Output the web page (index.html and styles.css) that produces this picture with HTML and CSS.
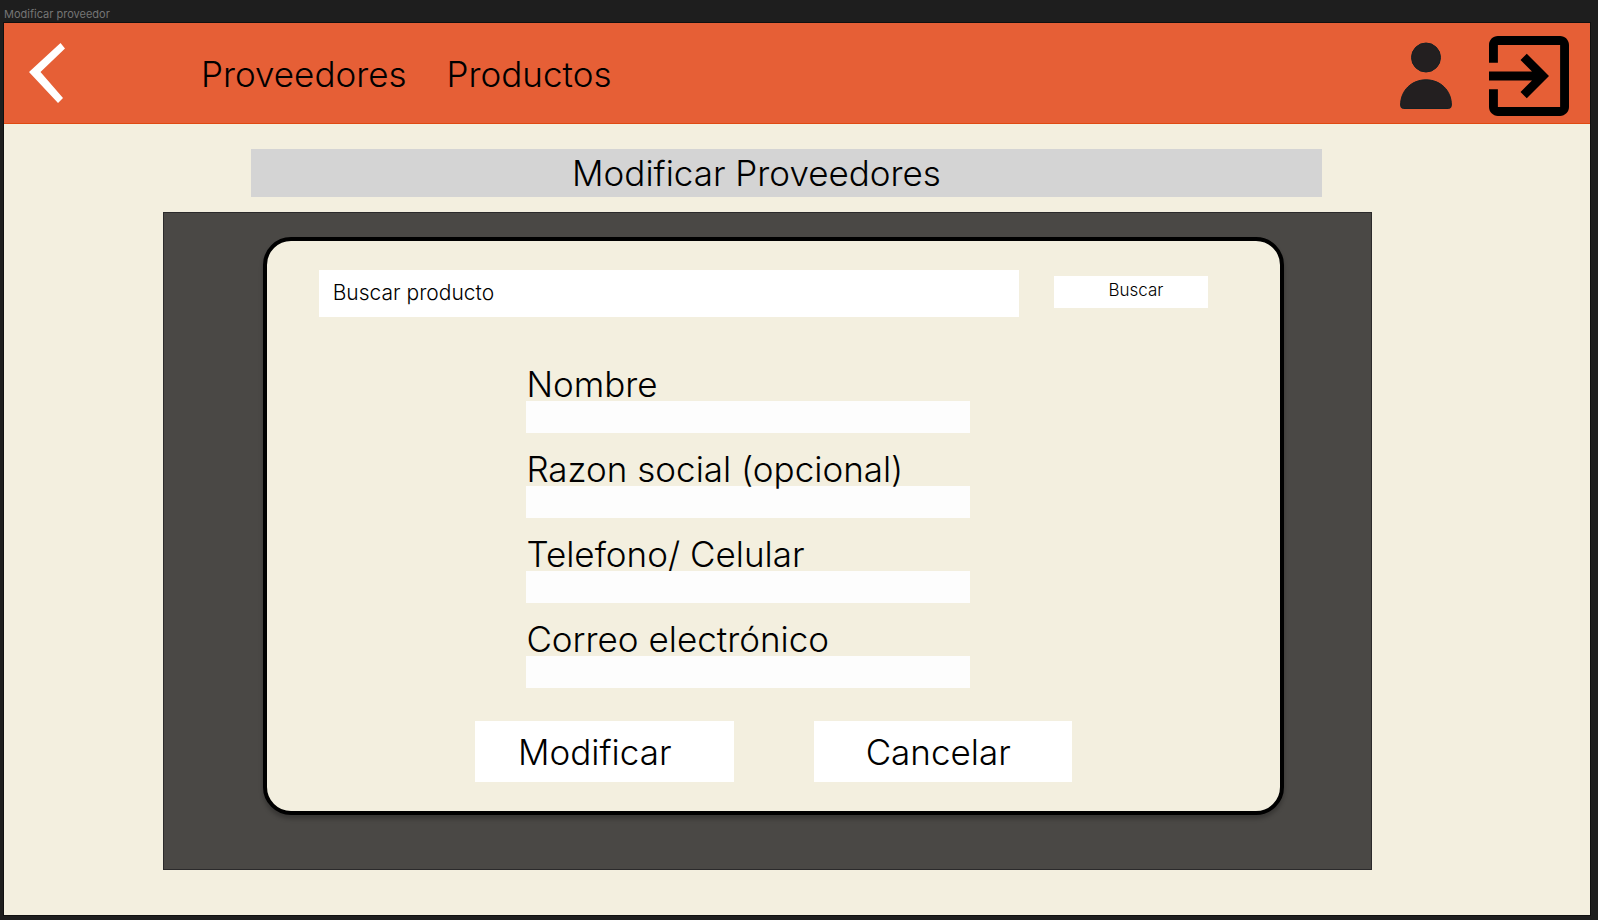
FILE: index.html
```html
<!DOCTYPE html>
<html lang="es">
<head>
<meta charset="utf-8">
<meta name="viewport" content="width=device-width, initial-scale=1">
<title>Modificar proveedor</title>
<link rel="stylesheet" href="styles.css">
</head>
<body>
<div class="frame-name">Modificar proveedor</div>
<div class="frame">
  <header class="topbar">
    <button class="icon-button" type="button" aria-label="Volver">
      <svg width="36" height="62" viewBox="0 0 36 62"><path d="M31.500 1 36 6.500 11.500 30 34 56 29 61 0 30Z" fill="#fff"/></svg>
    </button>
    <nav class="nav">
      <a href="#">Proveedores</a>
      <a href="#">Productos</a>
    </nav>
    <div class="actions">
      <button class="icon-button" type="button" aria-label="Perfil">
        <svg width="52" height="68" viewBox="0 0 52 68"><g fill="#231f20" stroke="#142024" stroke-width="1"><circle cx="26" cy="15.500" r="14.500"/><path d="M.6 63C.6 48 12 37.800 26 37.800S51.400 48 51.400 63Q51.400 66.500 48.500 66.500H3.500Q.6 66.500 .6 63Z"/></g></svg>
      </button>
      <button class="icon-button" type="button" aria-label="Salir">
        <svg width="80" height="80" viewBox="3 3 18 18"><path d="M10.090 15.590 11.500 17l5-5-5-5-1.410 1.410L12.670 11H3v2h9.670l-2.580 2.590zM19 3H5c-1.110 0-2 .9-2 2v4h2V5h14v14H5v-4H3v4c0 1.100.89 2 2 2h14c1.100 0 2-.9 2-2V5c0-1.100-.9-2-2-2z"/></svg>
      </button>
    </div>
  </header>
  <main>
    <div class="title-row"><h1 class="title">Modificar Proveedores</h1></div>
    <div class="panel-row">
      <section class="panel">
        <form class="card">
          <div class="search">
            <input class="search-input" type="text" placeholder="Buscar producto" aria-label="Buscar producto">
            <button class="search-button" type="button">Buscar</button>
          </div>
          <div class="fields">
            <div class="field"><label for="nombre">Nombre</label><input id="nombre" type="text"></div>
            <div class="field"><label for="razon">Razon social (opcional)</label><input id="razon" type="text"></div>
            <div class="field"><label for="telefono">Telefono/ Celular</label><input id="telefono" type="tel"></div>
            <div class="field"><label for="correo">Correo electrónico</label><input id="correo" type="email"></div>
          </div>
          <div class="buttons">
            <button class="button modify" type="submit">Modificar</button>
            <button class="button cancel" type="button">Cancelar</button>
          </div>
        </form>
      </section>
    </div>
  </main>
</div>
</body>
</html>
```
FILE: styles.css
```css
* { box-sizing: border-box; }
body {
  margin: 0;
  min-height: 100vh;
  display: flex;
  flex-direction: column;
  padding: 0 8px 5px 4px;
  background: #1e1e1e;
  color: #000;
  font-family: Inter, "Open Sans", sans-serif;
  font-size: 35px;
  font-weight: 300;
}
button, input { border: 0; border-radius: 0; margin: 0; padding: 0; font: inherit; color: inherit; }
.frame-name { padding-top: 7px; height: 23px; font-size: 11px; line-height: 14px; font-weight: 400; color: #757575; }
.frame { flex: 1; background: #f3efdf; box-shadow: 0 0 0 1px #101010; }
.topbar {
  display: flex;
  align-items: center;
  height: 101px;
  padding: 0 21px 0 25px;
  background: #e65f36;
  border-bottom: 1px solid #e04a12;
}
.icon-button { display: flex; background: none; cursor: pointer; }
.icon-button svg { display: block; }
.nav { display: flex; gap: 40px; margin-left: 136px; padding-top: 2px; }
.nav a { color: inherit; text-decoration: none; line-height: 40px; }
.actions { display: flex; align-items: center; gap: 37px; margin-left: auto; padding-top: 6px; }
.title-row { display: grid; grid-template-columns: 247fr 1071fr 268fr; padding-top: 25px; }
.title {
  grid-column: 2;
  margin: 0;
  padding-right: 60px;
  background: #d4d4d4;
  font-size: 35px;
  font-weight: 300;
  line-height: 48px;
  text-align: center;
}
.panel-row { display: grid; grid-template-columns: 159fr 1209fr 218fr; padding: 15px 0 44px; }
.panel {
  grid-column: 2;
  display: grid;
  grid-template-columns: 99fr 1023fr 87fr;
  padding: 24px 0 54px;
  border: 1px solid #2b2a2b;
  background: #4a4845;
}
.card {
  grid-column: 2;
  padding: 29px 0;
  border: 4px solid #000;
  border-radius: 28px;
  background: #f3efdf;
  box-shadow: 0 4px 4px rgba(0, 0, 0, .25);
}
.search { display: grid; grid-template-columns: 52fr 701fr 35fr 155fr 72fr; align-items: start; }
.search-input { grid-column: 2; width: 100%; height: 47px; padding: 0 14px 2px; background: #fff; font-size: 21px; }
.search-input::placeholder { color: #000; opacity: 1; }
.search-button { grid-column: 4; height: 32px; margin-top: 6px; padding: 0 0 4px 10px; background: #fff; font-size: 17px; }
.fields { display: grid; grid-template-columns: 260fr 444fr 311fr; row-gap: 19px; padding: 50px 0 33px; }
.field { grid-column: 2; display: flex; flex-direction: column; }
.field label { position: relative; z-index: 1; line-height: 34px; white-space: nowrap; pointer-events: none; }
.field input { width: 100%; height: 32px; padding: 0 8px; background: #fdfdfd; font-size: 20px; }
.buttons { display: grid; grid-template-columns: 209fr 259fr 80fr 259fr 208fr; }
.button { height: 61px; background: #fff; }
.modify { grid-column: 2; padding-right: 20px; }
.cancel { grid-column: 4; padding-right: 10px; }
```
